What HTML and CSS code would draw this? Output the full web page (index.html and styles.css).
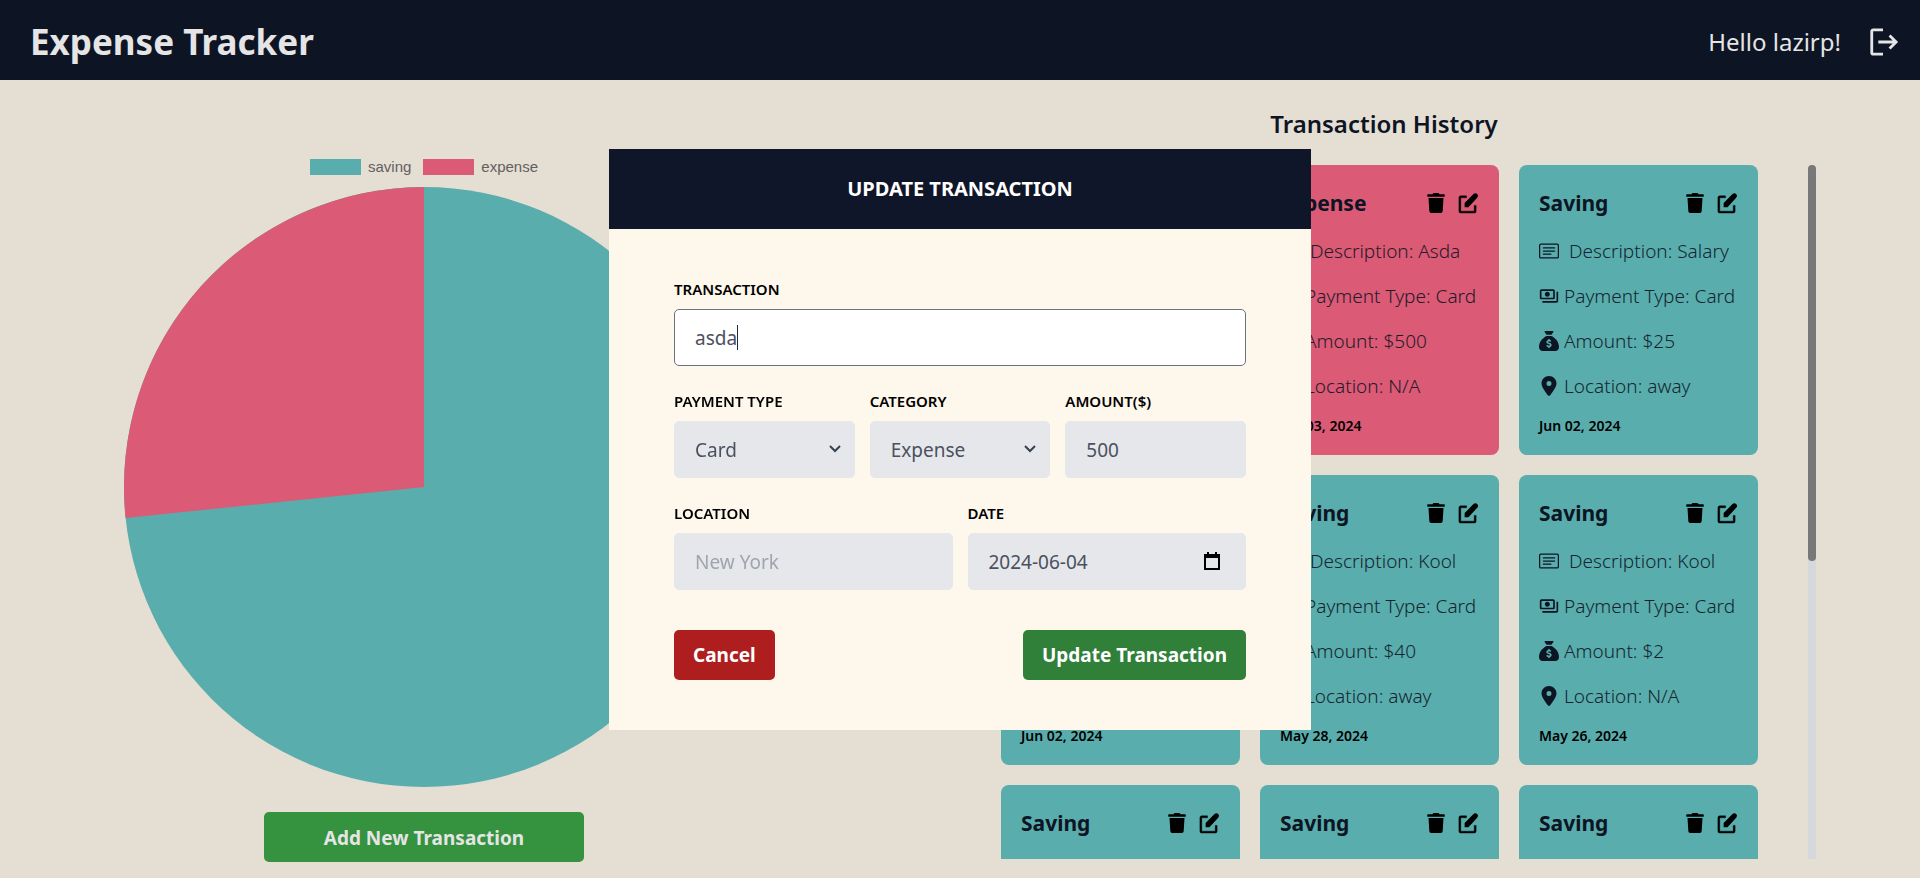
FILE: index.html
```html
<!DOCTYPE html>
<html lang="en">
<head>
<meta charset="utf-8">
<title>Expense Tracker</title>
<link rel="stylesheet" href="styles.css">
</head>
<body>
<svg class="sprite" aria-hidden="true">
  <symbol id="i-trash" viewBox="0 0 448 512"><path d="M432 32H312l-9.400-18.700A24 24 0 0 0 281.100 0H166.800a23.720 23.720 0 0 0-21.400 13.300L136 32H16A16 16 0 0 0 0 48v32a16 16 0 0 0 16 16h416a16 16 0 0 0 16-16V48a16 16 0 0 0-16-16zM53.200 467a48 48 0 0 0 47.900 45h245.800a48 48 0 0 0 47.900-45L416 128H32z"/></symbol>
  <symbol id="i-edit" viewBox="0 0 24 24"><path d="M19 20V14h2v6a2 2 0 0 1-2 2H5a2 2 0 0 1-2-2V6a2 2 0 0 1 2-2h6v2H5v14z" stroke="currentColor" stroke-width=".4"/><path d="M9 16v-4.500l9.300-9.300a2.300 2.300 0 0 1 3.800 3.800L13 16z"/></symbol>
  <symbol id="i-text" viewBox="0 0 16 16"><path d="M14.500 3a.5.5 0 0 1 .5.5v9a.5.5 0 0 1-.5.5h-13a.5.5 0 0 1-.5-.5v-9a.5.5 0 0 1 .5-.5zm-13-1A1.500 1.500 0 0 0 0 3.500v9A1.500 1.500 0 0 0 1.500 14h13a1.500 1.500 0 0 0 1.500-1.500v-9A1.500 1.500 0 0 0 14.500 2z"/><path d="M3 5.500a.5.5 0 0 1 .5-.5h9a.5.5 0 0 1 0 1h-9a.5.5 0 0 1-.5-.5M3 8a.5.5 0 0 1 .5-.5h9a.5.5 0 0 1 0 1h-9A.5.5 0 0 1 3 8m0 2.500a.5.5 0 0 1 .5-.5h6a.5.5 0 0 1 0 1h-6a.5.5 0 0 1-.5-.5"/></symbol>
  <symbol id="i-pay" viewBox="0 0 24 24"><path d="M19 14V6c0-1.100-.9-2-2-2H3c-1.100 0-2 .9-2 2v8c0 1.100.9 2 2 2h14c1.100 0 2-.9 2-2zm-2 0H3V6h14v8zm-7-7c-1.660 0-3 1.340-3 3s1.340 3 3 3 3-1.340 3-3-1.340-3-3-3zm13 0v11c0 1.100-.9 2-2 2H4v-2h17V7h2z"/></symbol>
  <symbol id="i-sack" viewBox="0 0 512 512"><path d="M320 96H192L144.600 24.900C137.500 14.200 145.100 0 157.900 0H354.100c12.800 0 20.400 14.200 13.300 24.900L320 96zM192 128H320c3.800 2.500 8.100 5.300 13 8.400C389.700 172.700 512 250.900 512 416c0 53-43 96-96 96H96c-53 0-96-43-96-96C0 250.900 122.300 172.700 179 136.400c4.800-3.100 9.200-5.900 13-8.400zm84 88c0-11-9-20-20-20s-20 9-20 20v14c-7.600 1.700-15.200 4.400-22.200 8.500-13.900 8.300-25.900 22.800-25.800 43.900.1 20.300 12 33.100 24.700 40.700 11 6.600 24.700 10.800 35.600 14l1.700.5c12.600 3.800 21.800 6.800 28 10.700 5.100 3.200 5.800 5.400 5.900 8.200.1 5-1.800 8-5.900 10.500-5 3.100-12.900 5-21.400 4.700-11.100-.4-21.500-3.900-35.100-8.500-2.300-.8-4.700-1.600-7.200-2.400-10.500-3.500-21.800 2.200-25.300 12.600s2.200 21.800 12.600 25.300c1.900.6 4 1.300 6.100 2.100 8.300 2.900 17.900 6.200 28.200 8.400V424c0 11 9 20 20 20s20-9 20-20v-13.800c8-1.700 16-4.500 23.200-9 14.300-8.900 25.100-24.100 24.800-45-.3-20.300-11.700-33.400-24.600-41.600-11.500-7.200-25.900-11.600-37.100-15l-.7-.2c-12.800-3.900-21.900-6.700-28.300-10.500-5.200-3.100-5.300-4.900-5.300-6.700 0-3.700 1.400-6.500 6.200-9.300 5.400-3.200 13.600-5.100 21.500-5 9.600.1 20.200 2.200 31.200 5.200 10.700 2.800 21.600-3.500 24.500-14.200s-3.500-21.600-14.200-24.500c-6.500-1.700-13.700-3.400-21.100-4.700V216z"/></symbol>
  <symbol id="i-pin" viewBox="0 0 384 512"><path d="M215.700 499.200C267 435 384 279.400 384 192 384 86 298 0 192 0S0 86 0 192c0 87.400 117 243 168.300 307.200 12.300 15.300 35.100 15.300 47.400 0zM192 128a64 64 0 1 1 0 128 64 64 0 1 1 0-128z"/></symbol>
</svg>

<header class="topbar">
  <h1 class="brand">Expense Tracker</h1>
  <div class="user">
    <span>Hello lazirp!</span>
    <button class="icon-btn" type="button" aria-label="Log out">
      <svg class="logout" viewBox="0 0 32 32"><path d="M16 3H5.500A1.500 1.500 0 0 0 4 4.500v23A1.500 1.500 0 0 0 5.500 29H16" fill="none" stroke="currentColor" stroke-width="3"/><path d="M11 16h18M23 9l7 7-7 7" fill="none" stroke="currentColor" stroke-width="3"/></svg>
    </button>
  </div>
</header>

<main class="page">
  <section class="summary">
    <ul class="legend">
      <li><span class="swatch saving"></span>saving</li>
      <li><span class="swatch expense"></span>expense</li>
    </ul>
    <svg class="pie" viewBox="0 0 600 600" role="img" aria-label="Saving and expense shares">
      <circle class="pie-saving" cx="300" cy="300" r="300"/>
      <path class="pie-expense" d="M300 300V0A300 300 0 0 0 1.600 331z"/>
    </svg>
    <button class="btn add" type="button">Add New Transaction</button>
  </section>

  <section class="history">
    <h2 class="history-title">Transaction History</h2>
    <div class="history-body">
      <div class="cards" id="cards"></div>
      <div class="scrollbar"><div class="thumb"></div></div>
    </div>
  </section>
</main>

<div class="overlay">
  <form class="modal" role="dialog" aria-labelledby="modal-title">
    <h2 class="modal-title" id="modal-title">UPDATE TRANSACTION</h2>
    <div class="modal-body">
      <div class="row">
        <div class="field"><label for="transaction">TRANSACTION</label>
          <div class="stack"><input class="control" id="transaction" type="text" value="asda"><span class="caret"></span></div></div>
      </div>
      <div class="row">
        <div class="field"><label for="payment">PAYMENT TYPE</label>
          <div class="stack"><select class="control" id="payment"><option>Card</option><option>Cash</option></select><svg class="chevron" viewBox="0 0 12 8"><path d="M1 1l5 5 5-5"/></svg></div></div>
        <div class="field"><label for="category">CATEGORY</label>
          <div class="stack"><select class="control" id="category"><option>Expense</option><option>Saving</option></select><svg class="chevron" viewBox="0 0 12 8"><path d="M1 1l5 5 5-5"/></svg></div></div>
        <div class="field"><label for="amount">AMOUNT($)</label><input class="control" id="amount" type="text" inputmode="numeric" value="500"></div>
      </div>
      <div class="row">
        <div class="field"><label for="location">LOCATION</label><input class="control" id="location" type="text" placeholder="New York"></div>
        <div class="field"><label for="date">DATE</label>
          <div class="stack"><input class="control" id="date" type="text" value="2024-06-04"><svg class="calendar" viewBox="0 0 16 18"><path d="M1 3h14v14H1z" fill="none" stroke="currentColor" stroke-width="2"/><path d="M1 3h14v3H1zM3 0h2v4H3zM11 0h2v4h-2z"/></svg></div></div>
      </div>
      <div class="actions">
        <button class="btn cancel" type="button">Cancel</button>
        <button class="btn update" type="submit">Update Transaction</button>
      </div>
    </div>
  </form>
</div>
<script src="cards.js"></script>
</body>
</html>
```

FILE: cards.js
```js
const transactions = [
  ["Expense", "Asda", "$500", "N/A", "Jun 04, 2024"],
  ["Expense", "Asda", "$500", "N/A", "Jun 03, 2024"],
  ["Saving", "Salary", "$25", "away", "Jun 02, 2024"],
  ["Saving", "Kool", "$40", "away", "Jun 02, 2024"],
  ["Saving", "Kool", "$40", "away", "May 28, 2024"],
  ["Saving", "Kool", "$2", "N/A", "May 26, 2024"],
  ["Saving", "Kool", "$2", "N/A", "May 26, 2024"],
  ["Saving", "Kool", "$2", "N/A", "May 26, 2024"],
  ["Saving", "Kool", "$2", "N/A", "May 26, 2024"]
];

const icon = (name) => `<svg class="icon icon-${name}"><use href="#i-${name}"/></svg>`;

document.getElementById("cards").innerHTML = transactions.map(([type, text, amount, place, date]) => `
  <article class="card ${type.toLowerCase()}">
    <div class="card-head">
      <h3>${type}</h3>
      <button class="icon-btn" type="button" aria-label="Delete">${icon("trash")}</button>
      <button class="icon-btn" type="button" aria-label="Edit">${icon("edit")}</button>
    </div>
    <p class="line wide">${icon("text")}<span>Description: ${text}</span></p>
    <p class="line">${icon("pay")}<span>Payment Type: Card</span></p>
    <p class="line">${icon("sack")}<span>Amount: ${amount}</span></p>
    <p class="line">${icon("pin")}<span>Location: ${place}</span></p>
    <p class="when">${date}</p>
  </article>`).join("");

document.getElementById("transaction").focus();
```

FILE: styles.css
```css
*, *::before, *::after { box-sizing: border-box; }
:root {
  --navy: #0d1424;
  --teal: #59adac;
  --pink: #db5a75;
  --sand: #e5ded3;
}
body {
  margin: 0;
  height: 100vh;
  display: flex;
  flex-direction: column;
  overflow: hidden;
  background: var(--sand);
  color: var(--navy);
  font: 19px/30px "Noto Sans", sans-serif;
}
h1, h2, h3, p, ul { margin: 0; padding: 0; }
button, input, select { font: inherit; color: inherit; }
.sprite { display: none; }
.icon { display: block; width: 20px; height: 20px; fill: currentColor; flex: none; }
.icon-btn { padding: 0; border: 0; background: none; cursor: pointer; }

.topbar {
  flex: none;
  height: 80px;
  padding: 4px 20px 0 30px;
  display: flex;
  align-items: center;
  justify-content: space-between;
  background: var(--navy);
  color: #e5e5e5;
}
.brand { font-size: 35px; line-height: 44px; font-weight: 700; }
.user { display: flex; align-items: center; gap: 25px; font-size: 24px; }
.logout { display: block; width: 34px; height: 30px; }

.page { flex: 1; min-height: 0; display: flex; justify-content: space-around; }
.summary { width: 640px; padding-top: 72px; display: flex; flex-direction: column; align-items: center; }
.legend {
  display: flex;
  gap: 12px;
  list-style: none;
  color: #626060;
  font: 15px/30px "Liberation Sans", Arial, sans-serif;
}
.legend li { display: flex; align-items: center; gap: 7px; }
.swatch { width: 51px; height: 16px; }
.swatch.saving, .card.saving { background: var(--teal); }
.swatch.expense, .card.expense { background: var(--pink); }
.pie { display: block; width: 600px; height: 600px; margin: 5px 0 25px; }
.pie-saving { fill: var(--teal); }
.pie-expense { fill: var(--pink); }
.btn { height: 50px; padding: 1px 19px 0; border: 0; border-radius: 5px; color: #fff; font-weight: 700; cursor: pointer; }
.add { width: 320px; background: #35923f; color: #e5e5e5; }

.history { width: 45%; padding: 24px 0 19px; display: flex; flex-direction: column; }
.history-title { padding-bottom: 21px; text-align: center; font-size: 24px; line-height: 40px; font-weight: 600; }
.history-body { flex: 1; min-height: 0; display: flex; gap: 50px; }
.cards {
  flex: 1;
  margin-left: 49px;
  overflow: hidden;
  display: grid;
  grid-template-columns: repeat(3, 1fr);
  grid-auto-rows: max-content;
  gap: 20px;
}
.scrollbar { width: 8px; background: #d5d9db; border-radius: 4px 4px 0 0; }
.thumb { height: 57%; background: #787878; border-radius: 4px; }

.card { padding: 20px 20px 19px; border-radius: 8px; white-space: nowrap; overflow: hidden; }
.card-head { display: flex; align-items: center; gap: 10px; height: 36px; margin-bottom: 15px; color: #000; }
.card-head h3 { margin-right: auto; font-size: 21px; font-weight: 700; color: var(--navy); }
.icon-edit { width: 23px; height: 23px; }
.line { display: flex; align-items: center; gap: 5px; margin-bottom: 15px; }
.line span { opacity: .9; font-weight: 300; }
.line.wide { gap: 10px; }
.when { color: #000; font-size: 14px; line-height: 20px; font-weight: 600; }

.overlay { position: fixed; inset: 0; display: flex; align-items: center; justify-content: center; }
.modal { width: 702px; background: #fef7ec; color: #000; }
.modal-title { background: #101629; color: #fff; text-align: center; font-size: 20px; line-height: 80px; font-weight: 700; }
.modal-body { padding: 50px 65px; }
.row { display: flex; gap: 15px; margin-bottom: 25px; }
.field { flex: 1 1 0; min-width: 0; }
.field label { display: block; margin-bottom: 10px; font-size: 15px; line-height: 20px; font-weight: 600; }
.control {
  display: block;
  width: 100%;
  height: 57px;
  padding: 2px 20px 0;
  border: 1px solid #e5e7eb;
  border-radius: 5px;
  outline: 0;
  appearance: none;
  background: #e5e7eb;
  color: #4b5060;
}
.control:focus { background: #fff; border-color: #6b7280; caret-color: transparent; }
.control::placeholder { color: #a0a4ae; opacity: 1; }
.stack { display: grid; align-items: center; }
.stack > * { grid-area: 1 / 1; pointer-events: none; }
.stack > .control { pointer-events: auto; }
.caret { width: 1px; height: 25px; margin-left: 63px; background: #1f2937; }
.chevron { width: 12px; height: 8px; margin-right: 14px; justify-self: end; fill: none; stroke: #374151; stroke-width: 2; }
.calendar { width: 16px; height: 18px; margin-right: 26px; justify-self: end; color: #000; fill: currentColor; }
.actions { display: flex; justify-content: space-between; padding-top: 15px; }
.cancel { background: #ae1e1f; }
.update { background: #30803a; }
```
